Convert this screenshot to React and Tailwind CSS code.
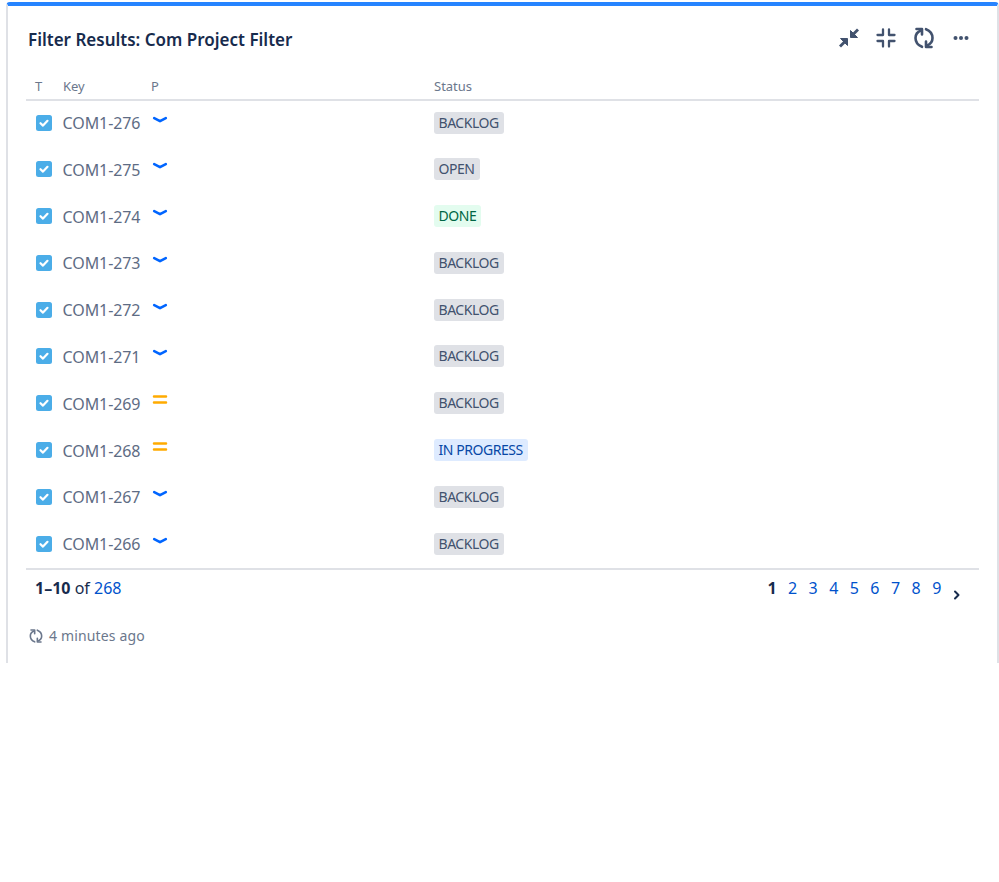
const FONT = "font-['Noto_Sans','Open_Sans',sans-serif]";

const rows = [
  ["COM1-276", "low", "BACKLOG"],
  ["COM1-275", "low", "OPEN"],
  ["COM1-274", "low", "DONE"],
  ["COM1-273", "low", "BACKLOG"],
  ["COM1-272", "low", "BACKLOG"],
  ["COM1-271", "low", "BACKLOG"],
  ["COM1-269", "med", "BACKLOG"],
  ["COM1-268", "med", "IN PROGRESS"],
  ["COM1-267", "low", "BACKLOG"],
  ["COM1-266", "low", "BACKLOG"],
];

const lozenge = {
  BACKLOG: "bg-[#dfe1e6] text-[#42526e]",
  OPEN: "bg-[#dfe1e6] text-[#42526e]",
  DONE: "bg-[#e3fcef] text-[#006644]",
  "IN PROGRESS": "bg-[#deebff] text-[#0747a6]",
};

function TaskIcon() {
  return (
    <svg width="16" height="16" viewBox="0 0 16 16" className="block">
      <rect width="16" height="16" rx="2.5" fill="#4bade8" />
      <path d="M4.5 8.2 L7 10.6 L11.5 5.8" fill="none" stroke="#fff" strokeWidth="2.2" strokeLinecap="round" strokeLinejoin="round" />
    </svg>
  );
}

function Priority({ kind }) {
  if (kind === "low") {
    return (
      <svg width="16" height="16" viewBox="0 0 16 16" className="block">
        <path d="M2.2 5.2 L8 8.2 L13.8 5.2" fill="none" stroke="#0065ff" strokeWidth="2.6" strokeLinecap="round" strokeLinejoin="round" />
      </svg>
    );
  }
  return (
    <svg width="16" height="16" viewBox="0 0 16 16" className="block">
      <path d="M2 3.5 H14 M2 9.5 H14" fill="none" stroke="#ffab00" strokeWidth="2.5" strokeLinecap="round" />
    </svg>
  );
}

function Refresh({ size, color, sw }) {
  return (
    <svg width={size} height={size} viewBox="0 0 24 24" className="block" fill="none" stroke={color} strokeWidth={sw} strokeLinecap="round" strokeLinejoin="round">
      <path d="M9 4.5 C5 6 3.5 9 3.5 12 C3.5 15.5 5.5 19 10 20.8" />
      <path d="M4.5 3 H10 V8.5" />
      <path d="M15 19.5 C19 18 20.5 15 20.5 12 C20.5 8.5 18.5 5 14 3.2" />
      <path d="M19.5 21 H14 V15.5" />
    </svg>
  );
}

function Collapse() {
  return (
    <svg width="24" height="24" viewBox="0 0 24 24" className="block" fill="#42526e" stroke="#42526e" strokeWidth="1" strokeLinejoin="round">
      <path d="M13.5 4.5 L13.5 11.5 L20.5 11.5 Z" />
      <path d="M21 3.5 L15 9.5" fill="none" strokeWidth="2.8" />
      <path d="M10.5 12.5 L10.5 19.5 L3.5 12.5 Z" />
      <path d="M3 20.5 L8 15.5" fill="none" strokeWidth="2.8" />
    </svg>
  );
}

function Compress() {
  return (
    <svg width="24" height="24" viewBox="0 0 24 24" className="block" fill="none" stroke="#42526e" strokeWidth="2.3" strokeLinecap="round" strokeLinejoin="round">
      <path d="M9 3.5 V9 H3.5" />
      <path d="M15 3.5 V9 H20.5" />
      <path d="M9 20.5 V15 H3.5" />
      <path d="M15 20.5 V15 H20.5" />
    </svg>
  );
}

function More() {
  return (
    <svg width="24" height="24" viewBox="0 0 24 24" className="block" fill="#42526e">
      <circle cx="6.5" cy="12" r="2" />
      <circle cx="12" cy="12" r="2" />
      <circle cx="17.5" cy="12" r="2" />
    </svg>
  );
}

export default function App() {
  return (
    <div className={`${FONT} w-[999px] h-[882px] bg-white pt-[2px] pl-[6px]`}>
      <div className="h-[661px] rounded-t-[4px] border-x-2 border-[#dfe1e6] border-t-4 border-t-[#2684ff] pl-[18px] pr-[18px] box-border">
        <div className="flex items-center justify-between h-[68px] pl-[2px] pr-[6px]">
          <h1 className="text-[17px] leading-[24px] font-semibold text-[#172b4d]">Filter Results: Com Project Filter</h1>
          <div className="flex items-center gap-[13.5px] mt-[-4px]">
            <Collapse />
            <Compress />
            <Refresh size={24} color="#42526e" sw={2.6} />
            <More />
          </div>
        </div>

        <div className="flex items-center h-[25px] border-b-2 border-[#dfe1e6] text-[13px] text-[#6b778c] box-content">
          <div className="w-[37px] pl-[9px]">T</div>
          <div className="w-[88px]">Key</div>
          <div className="w-[283px]">P</div>
          <div>Status</div>
        </div>

        <div>
          {rows.map(([key, pri, status]) => (
            <div key={key} className="flex h-[46.8px] pt-[1px]">
              <div className="w-[37px] pl-[10px] pt-[12.5px]"><TaskIcon /></div>
              <div className="w-[88px] text-[16px] leading-[24px] pt-[9px] text-[#5e6c84] tracking-[-0.08px] ml-[-0.5px]">{key}</div>
              <div className="w-[283px] pl-[1.5px] pt-[10.5px]"><Priority kind={pri} /></div>
              <div className="pt-[7.5px]">
                <span className={`inline-flex items-center h-[22px] px-[5px] rounded-[3px] text-[14px] leading-[22px] tracking-[-0.45px] ${lozenge[status]}`}>{status}</span>
              </div>
            </div>
          ))}
        </div>

        <div className="border-t-2 border-[#dfe1e6] flex justify-between h-[47px] text-[16px] leading-[24px] mt-[-1px]">
          <div className="pl-[9px] pt-[6px] text-[#172b4d]">
            <span className="font-bold">1–10</span> of <span className="text-[#0052cc]">268</span>
          </div>
          <div className="flex pt-[6px] pr-[14px] text-[#0052cc]">
            {[1, 2, 3, 4, 5, 6, 7, 8, 9].map((n) => (
              <span key={n} className={`w-[20.6px] text-center ${n === 1 ? "font-bold text-[#172b4d]" : ""}`}>{n}</span>
            ))}
            <svg width="16" height="16" viewBox="0 0 16 16" className="mt-[11px] ml-[2px]">
              <path d="M6 4.5 L9.5 8 L6 11.5" fill="none" stroke="#172b4d" strokeWidth="2" strokeLinecap="round" strokeLinejoin="round" />
            </svg>
          </div>
        </div>

        <div className="flex items-center gap-[5px] pl-[2px] pt-[11px] text-[14px] leading-[20px] tracking-[0.15px] text-[#6b778c]">
          <Refresh size={16} color="#6b778c" sw={2.4} />
          <span>4 minutes ago</span>
        </div>
      </div>
    </div>
  );
}
